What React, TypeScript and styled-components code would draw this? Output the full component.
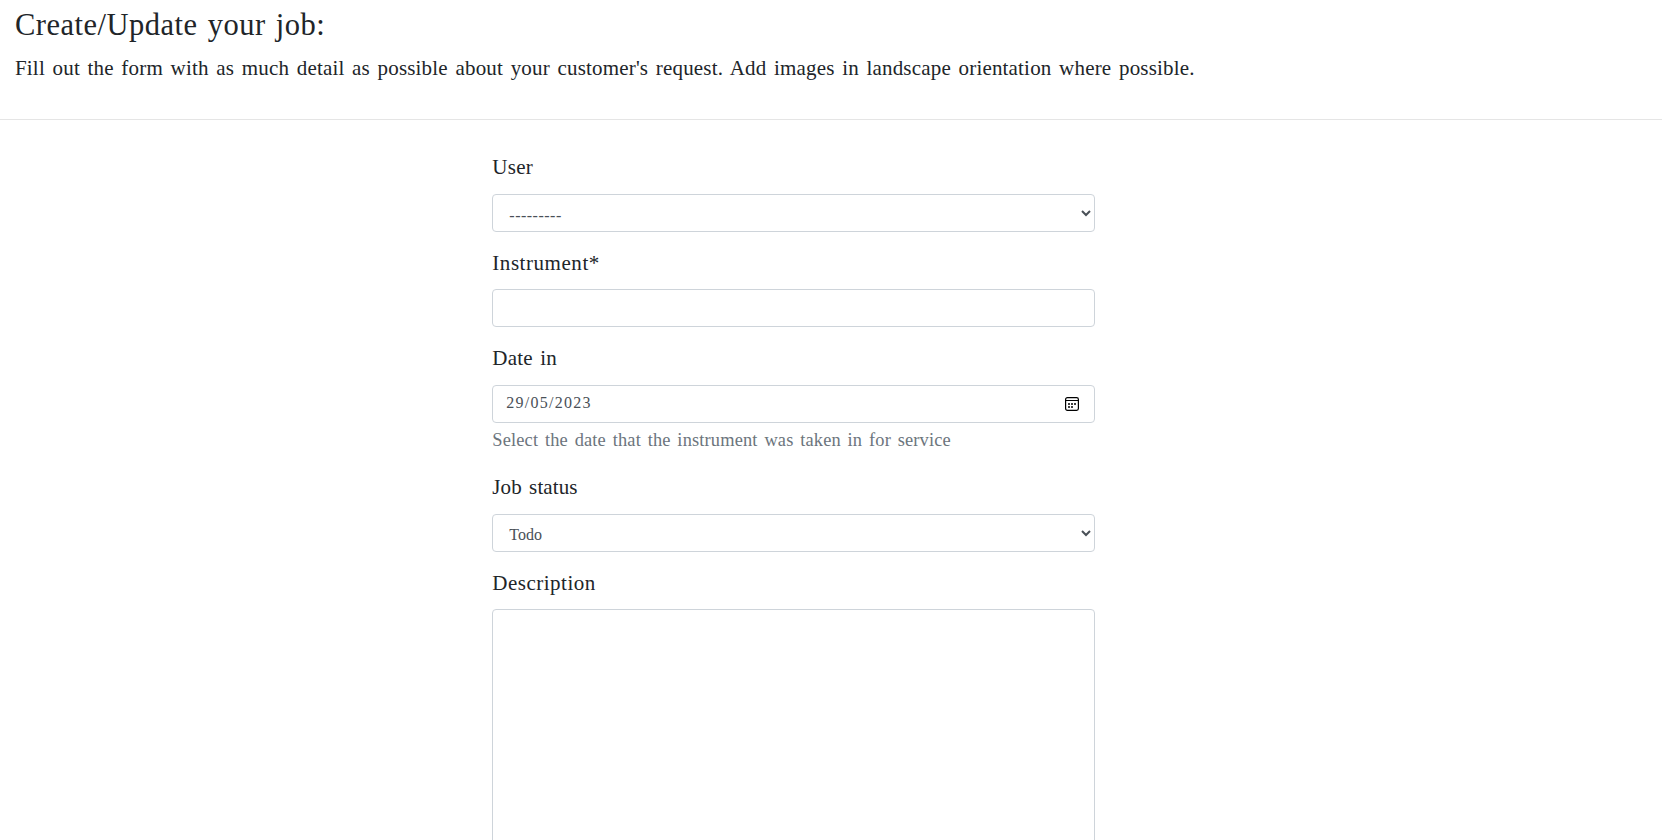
import React from "react";
import styled, { createGlobalStyle } from "styled-components";

const GlobalStyle = createGlobalStyle`
  *, *::before, *::after { box-sizing: border-box; }
  html, body { margin: 0; height: 100%; overflow: hidden; background: #fff; }
  body {
    font-family: "Liberation Serif", "Times New Roman", serif;
    font-size: 21px;
    line-height: 1.6;
    color: #212529;
  }
`;

const Page = styled.main`
  height: 840px;
  overflow: hidden;
`;

const Intro = styled.header`
  height: 120px;
  padding: 6px 15px 0;
  border-bottom: 1px solid rgba(0, 0, 0, 0.1);
`;

const Title = styled.h1`
  margin: 0;
  font-size: 30.5px;
  font-weight: 400;
  line-height: 38px;
  letter-spacing: 0.5px;
  word-spacing: 2px;
`;

const Lead = styled.p`
  margin: 7px 0 0;
  line-height: 34px;
  letter-spacing: 0.18px;
  word-spacing: 2.2px;
  white-space: nowrap;
`;

const Form = styled.form`
  width: 603.1px;
  margin: 32px 0 0 492.3px;
`;

const Field = styled.div`
  margin-bottom: 16px;
`;

const Label = styled.label<{ $spacing: number }>`
  display: block;
  height: 33.6px;
  margin-bottom: 8px;
  line-height: 31px;
  letter-spacing: ${(p) => p.$spacing}px;
  word-spacing: 2px;
`;

const Control = styled.div`
  display: flex;
  align-items: center;
  height: 38px;
  border: 1px solid #ced4da;
  border-radius: 4px;
  background: #fff;
`;

const TextInput = styled.input`
  flex: 1;
  min-width: 0;
  height: 100%;
  padding: 0 13px 2px;
  border: 0;
  outline: 0;
  background: transparent;
  font: 16px "Liberation Serif", serif;
  letter-spacing: 1.25px;
  color: #495057;
`;

const Select = styled.select<{ $spacing: number; $drop: number }>`
  display: block;
  width: 100%;
  height: 38px;
  padding: ${(p) => p.$drop}px 12px 3px;
  border: 1px solid #ced4da;
  border-radius: 4px;
  background: #fff;
  font: 16px "Liberation Serif", serif;
  letter-spacing: ${(p) => p.$spacing}px;
  color: #495057;
`;

const CalendarIcon = styled.svg`
  width: 14px;
  height: 14px;
  margin-right: 15px;
`;

const Help = styled.small`
  display: block;
  height: 29.4px;
  margin-top: 4px;
  font-size: 18.4px;
  line-height: 26px;
  letter-spacing: 0.16px;
  word-spacing: 2px;
  color: #6c757d;
`;

const TextArea = styled.textarea`
  display: block;
  width: 100%;
  height: 300px;
  border: 1px solid #ced4da;
  border-radius: 4px;
  resize: none;
`;

export default function App() {
  return (
    <Page>
      <GlobalStyle />
      <Intro>
        <Title>Create/Update your job:</Title>
        <Lead>
          Fill out the form with as much detail as possible about your customer's request. Add images in landscape
          orientation where possible.
        </Lead>
      </Intro>
      <Form>
        <Field>
          <Label htmlFor="user" $spacing={0.25}>User</Label>
          <Select id="user" $spacing={0.5} $drop={8}>
            <option>---------</option>
          </Select>
        </Field>
        <Field>
          <Label htmlFor="instrument" $spacing={0.55}>Instrument*</Label>
          <Control>
            <TextInput id="instrument" />
          </Control>
        </Field>
        <Field>
          <Label htmlFor="date" $spacing={0.2}>Date in</Label>
          <Control>
            <TextInput id="date" defaultValue="29/05/2023" />
            <CalendarIcon viewBox="0 0 14 14" fill="none" stroke="#000">
              <rect x="0.6" y="0.6" width="12.8" height="12.8" rx="1.8" strokeWidth="1.2" />
              <path d="M1 3.5H13" />
              <path d="M3 7H5M6 7H8M9 7H11M3 10H5M6 10H8" strokeWidth="1.6" />
            </CalendarIcon>
          </Control>
          <Help>Select the date that the instrument was taken in for service</Help>
        </Field>
        <Field>
          <Label htmlFor="status" $spacing={0.1}>Job status</Label>
          <Select id="status" $spacing={0} $drop={7}>
            <option>Todo</option>
          </Select>
        </Field>
        <Field>
          <Label htmlFor="description" $spacing={0.5}>Description</Label>
          <TextArea id="description" />
        </Field>
      </Form>
    </Page>
  );
}
